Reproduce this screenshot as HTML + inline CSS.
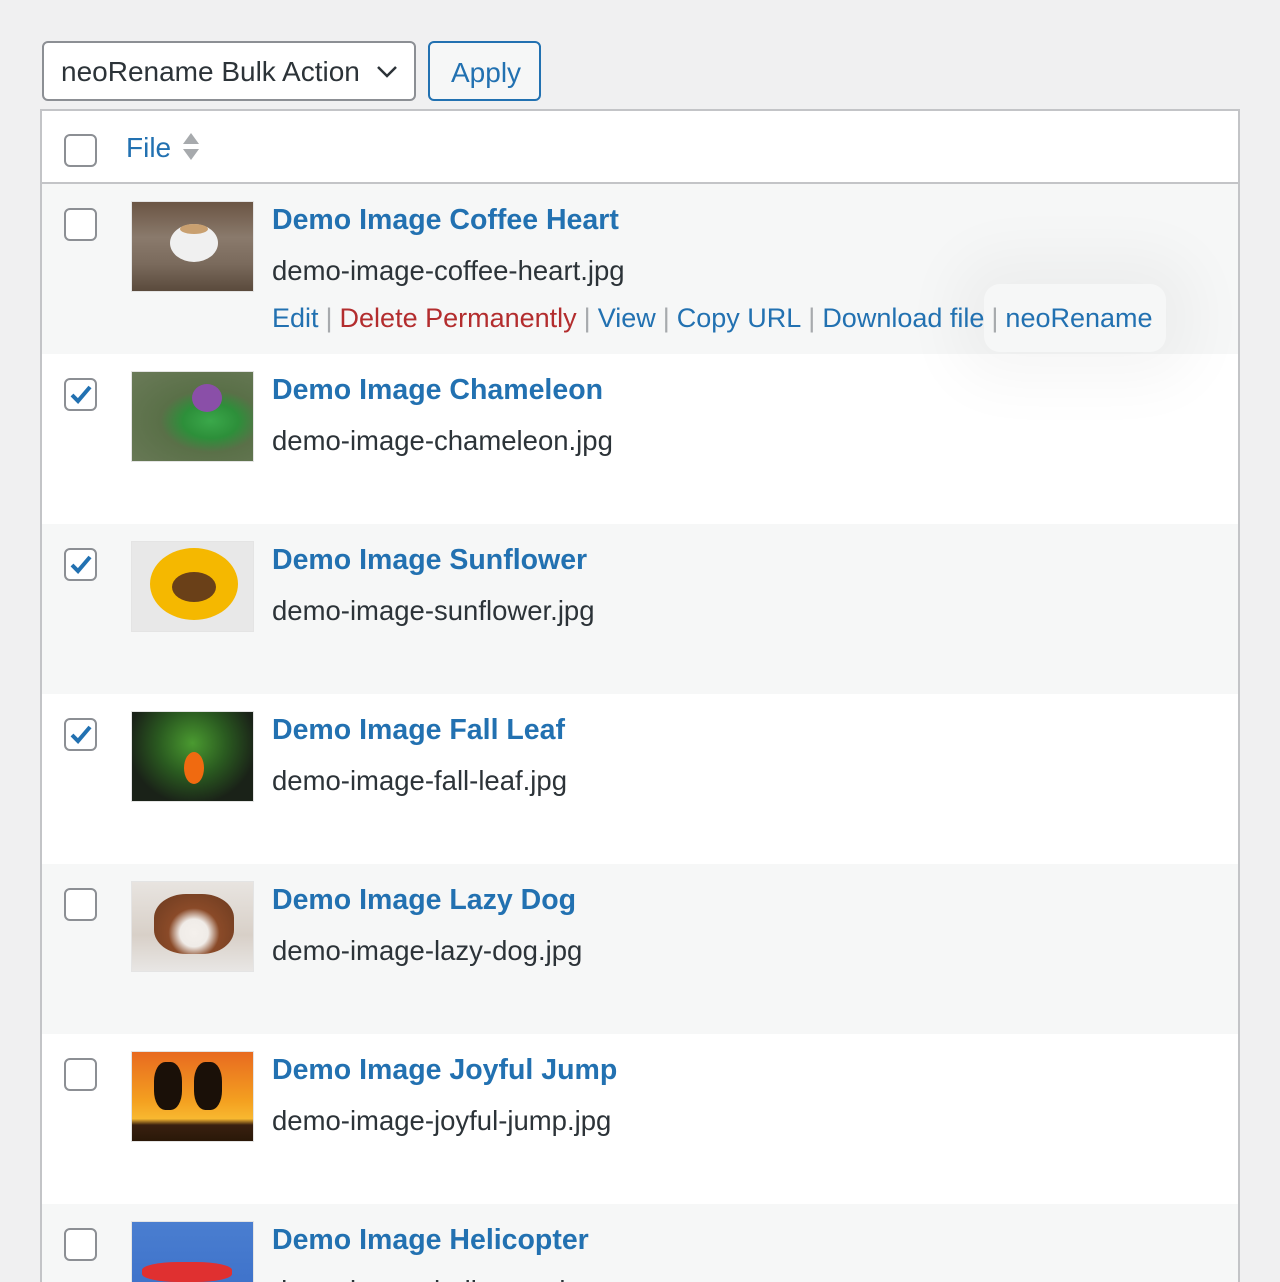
<!DOCTYPE html>
<html style="height:1282px;overflow:hidden"><head><meta charset="utf-8"><style>
*{box-sizing:border-box;margin:0;padding:0}
body{width:1280px;height:1282px;background:#f0f0f1;font-family:"Liberation Sans",sans-serif;position:relative;overflow:hidden;color:#2c3338}
.sel{position:absolute;left:42px;top:41px;width:374px;height:60px;border:2px solid #8c8f94;border-radius:6px;background:#fff;font-size:28px;padding:13px 0 0 17px;color:#2c3338}
.sel svg{position:absolute;right:16px;top:22px}
.btn{position:absolute;left:428px;top:41px;width:113px;height:60px;border:2px solid #2271b1;border-radius:6px;background:#f6f7f7;color:#2271b1;font-size:28px;padding:14px 0 0 21px}
.tbl{position:absolute;left:40px;top:109px;width:1200px;height:1180px;border:2px solid #c3c4c7;background:#fff;overflow:hidden}
.head{position:absolute;left:0;top:0;width:1196px;height:73px;border-bottom:2px solid #c3c4c7;background:#fff}
.cb{position:absolute;width:33px;height:33px;border:2px solid #8c8f94;border-radius:6px;background:#fff}
.cb svg{position:absolute;left:3px;top:3px}
.row{position:absolute;left:0;width:1196px;height:170px}
.alt{background:#f6f7f7}
.th{position:absolute;left:89px;top:17px;width:123px;height:91px;border:1px solid #e4e4e4}
.t{position:absolute;left:230px;top:20px;font-size:28.5px;font-weight:bold;color:#2271b1;white-space:nowrap}
.f{position:absolute;left:230px;top:71px;font-size:27.5px;color:#2c3338;white-space:nowrap}
.a{position:absolute;left:230px;top:119px;font-size:27px;color:#2271b1;white-space:nowrap}
.a .s{color:#a7aaad;margin:0 7px}
.a .r{color:#b32d2e}
.hl{position:absolute;left:942px;top:100px;width:182px;height:68px;border-radius:16px;background:#f6f7f7;box-shadow:0 0 60px 30px rgba(0,0,0,0.04)}
</style></head><body>
<div class="sel">neoRename Bulk Action<svg width="22" height="14" viewBox="0 0 22 14"><path d="M2 2 L11 11 L20 2" stroke="#2c3338" stroke-width="2.5" fill="none"/></svg></div>
<div class="btn">Apply</div>
<div class="tbl">
<div class="head"><div class="cb" style="left:22px;top:23px"></div>
<div style="position:absolute;left:84px;top:21px;font-size:28px;color:#2271b1">File</div>
<svg style="position:absolute;left:140px;top:20px" width="18" height="32" viewBox="0 0 18 32"><path d="M1 13 L9 2 L17 13Z M1 18 L9 29 L17 18Z" fill="#a7aaad"/></svg>
</div>

<div class="row alt" style="top:73px">
<div class="hl"></div>
<div class="cb" style="left:22px;top:24px"></div>
<div class="th" style="background:linear-gradient(180deg,#6b5544 0%,#8a7a6c 40%,#7a6a5c 70%,#5a4a3c 100%)"><div style="position:absolute;left:38px;top:22px;width:48px;height:38px;border-radius:50%;background:#f0f0f0"></div><div style="position:absolute;left:48px;top:22px;width:28px;height:10px;border-radius:50%;background:#c9a070"></div></div>
<div class="t">Demo Image Coffee Heart</div>
<div class="f">demo-image-coffee-heart.jpg</div>
<div class="a">Edit<span class="s">|</span><span class="r">Delete Permanently</span><span class="s">|</span>View<span class="s">|</span>Copy URL<span class="s">|</span>Download file<span class="s">|</span>neoRename</div>
</div>

<div class="row" style="top:243px">
<div class="cb" style="left:22px;top:24px"><svg width="24" height="24" viewBox="0 0 24 24"><path d="M3 12 L9 18 L21 4" stroke="#2271b1" stroke-width="4" fill="none"/></svg></div>
<div class="th" style="background:radial-gradient(ellipse at 65% 55%,#3aa84a 0,#2d8f3a 25%,#5a7048 45%,#6a7a58 100%)"><div style="position:absolute;left:60px;top:12px;width:30px;height:28px;border-radius:50%;background:#8a4fa8"></div></div>
<div class="t">Demo Image Chameleon</div>
<div class="f">demo-image-chameleon.jpg</div>
</div>

<div class="row alt" style="top:413px">
<div class="cb" style="left:22px;top:24px"><svg width="24" height="24" viewBox="0 0 24 24"><path d="M3 12 L9 18 L21 4" stroke="#2271b1" stroke-width="4" fill="none"/></svg></div>
<div class="th" style="background:#e8e8e8"><div style="position:absolute;left:18px;top:6px;width:88px;height:72px;border-radius:50%;background:#f5b800"></div><div style="position:absolute;left:40px;top:30px;width:44px;height:30px;border-radius:50%;background:#6a4018"></div></div>
<div class="t">Demo Image Sunflower</div>
<div class="f">demo-image-sunflower.jpg</div>
</div>

<div class="row" style="top:583px">
<div class="cb" style="left:22px;top:24px"><svg width="24" height="24" viewBox="0 0 24 24"><path d="M3 12 L9 18 L21 4" stroke="#2271b1" stroke-width="4" fill="none"/></svg></div>
<div class="th" style="background:radial-gradient(ellipse at 50% 35%,#4a9a30 0,#2a5a20 40%,#1a2218 75%)"><div style="position:absolute;left:52px;top:40px;width:20px;height:32px;border-radius:50%;background:#f06a10"></div></div>
<div class="t">Demo Image Fall Leaf</div>
<div class="f">demo-image-fall-leaf.jpg</div>
</div>

<div class="row alt" style="top:753px">
<div class="cb" style="left:22px;top:24px"></div>
<div class="th" style="background:linear-gradient(180deg,#e8e4e0 0%,#d8d0c8 60%,#e8e6e4 100%)"><div style="position:absolute;left:22px;top:12px;width:80px;height:60px;border-radius:40%;background:radial-gradient(ellipse at 50% 65%,#f4f0ec 0,#f0ece8 25%,#8a4a28 45%,#6a3a20 100%)"></div></div>
<div class="t">Demo Image Lazy Dog</div>
<div class="f">demo-image-lazy-dog.jpg</div>
</div>

<div class="row" style="top:923px">
<div class="cb" style="left:22px;top:24px"></div>
<div class="th" style="background:linear-gradient(180deg,#e86a20 0%,#f4a020 55%,#f8b830 75%,#3a2010 82%,#2a1808 100%)"><div style="position:absolute;left:22px;top:10px;width:28px;height:48px;background:#1a1008;border-radius:40%"></div><div style="position:absolute;left:62px;top:10px;width:28px;height:48px;background:#1a1008;border-radius:40%"></div></div>
<div class="t">Demo Image Joyful Jump</div>
<div class="f">demo-image-joyful-jump.jpg</div>
</div>

<div class="row alt" style="top:1093px">
<div class="cb" style="left:22px;top:24px"></div>
<div class="th" style="background:linear-gradient(180deg,#4a7ed0,#3a6ec8)"><div style="position:absolute;left:10px;top:40px;width:90px;height:20px;border-radius:40%;background:#e03030"></div></div>
<div class="t">Demo Image Helicopter</div>
<div class="f">demo-image-helicopter.jpg</div>
</div>
</div>
</body></html>
